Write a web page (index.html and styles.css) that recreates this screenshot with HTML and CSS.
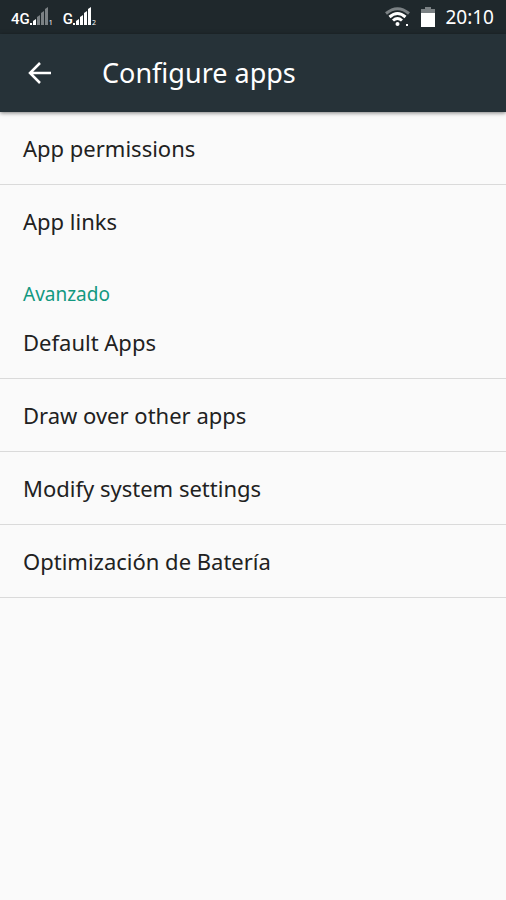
FILE: index.html
```html
<!DOCTYPE html>
<html lang="en">
<head>
<meta charset="utf-8">
<meta name="viewport" content="width=device-width, initial-scale=1">
<title>Configure apps</title>
<link rel="stylesheet" href="styles.css">
</head>
<body>
<div class="statusbar">
   <div class="sim">
      <span class="network">4G</span>
      <svg class="signal" width="20" height="20" viewBox="0 0 20 20" fill="#fff">
         <rect x="0" y="16" width="2" height="2"/>
         <path d="M3 14l3-2v6H3z"/>
         <path fill="#7b8184" d="M7 10l3-2v10H7zM11 6l3-2v14h-3zM15 2l3-2v18h-3z"/>
      </svg>
      <span class="slot">1</span>
   </div>
   <div class="sim">
      <span class="network">G</span>
      <svg class="signal" width="20" height="20" viewBox="0 0 20 20" fill="#fff">
         <rect x="0" y="16" width="2" height="2"/>
         <path d="M3 14l3-2v6H3zM7 10l3-2v10H7zM11 6l3-2v14h-3zM15 2l3-2v18h-3z"/>
      </svg>
      <span class="slot">2</span>
   </div>
   <div class="system">
      <svg width="26" height="20" viewBox="0 0 26 20" fill="none" stroke="#fff" stroke-width="3">
         <path stroke="#7b8184" d="M1 6.500Q12.500 -3 24 6.500"/>
         <path d="M4.500 10Q12.500 3 20.500 10"/>
         <path d="M8 13.500Q12.500 9.500 17 13.500"/>
         <circle cx="12.500" cy="17" r="2" fill="#fff" stroke="none"/>
         <path stroke-width="2" d="M21 18h2"/>
      </svg>
      <svg class="battery" width="14" height="20" viewBox="0 0 14 20">
         <path fill="#7b8184" d="M4 0h6v2h4v4H0V2h4z"/>
         <path fill="#fff" d="M0 6h14v14H0z"/>
      </svg>
      <span class="clock">20:10</span>
   </div>
</div>

<header class="toolbar">
   <button class="back" type="button" aria-label="Back">
      <svg width="24" height="24" viewBox="0 0 24 24" fill="none" stroke="#fff" stroke-width="2.500">
         <path d="M24 12H3M13 2L3 12l10 10"/>
      </svg>
   </button>
   <h1>Configure apps</h1>
</header>

<main>
   <ul class="list">
      <li><a href="#permissions">App permissions</a></li>
      <li><a href="#links">App links</a></li>
   </ul>
   <h2>Avanzado</h2>
   <ul class="list advanced">
      <li><a href="#default">Default Apps</a></li>
      <li><a href="#draw">Draw over other apps</a></li>
      <li><a href="#modify">Modify system settings</a></li>
      <li><a href="#battery">Optimización de Batería</a></li>
   </ul>
</main>
</body>
</html>
```
FILE: styles.css
```css
* {
    box-sizing: border-box;
}

body {
    margin: 0;
    background: #fafafa;
    color: #212121;
    font-family: "Noto Sans", "Open Sans", sans-serif;
}

/* Status bar */
.statusbar {
    display: flex;
    align-items: center;
    height: 34px;
    padding: 0 12px 0 11px;
    background: #1f282c;
    color: #fff;
}

.sim {
    display: flex;
    align-items: flex-end;
    height: 20px;
    margin-right: 10px;
}

.network {
    font-family: Roboto, sans-serif;
    font-size: 15px;
    font-weight: 500;
    line-height: 16px;
}

.slot {
    font-size: 7px;
    line-height: 8px;
    margin-left: -1px;
}

.system {
    display: flex;
    align-items: center;
    margin-left: auto;
}

.battery {
    margin: 0 10px;
}

.clock {
    font-size: 19px;
    line-height: 24px;
}

/* Toolbar */
.toolbar {
    display: flex;
    align-items: center;
    height: 78px;
    padding: 0 23px;
    background: #263238;
    color: #fff;
    box-shadow: 0 1px 4px rgba(0, 0, 0, 0.5);
}

.back {
    width: 32px;
    height: 32px;
    margin-right: 47px;
    padding: 4px;
    border: 0;
    background: none;
}

.back svg {
    display: block;
}

h1 {
    margin: 0;
    font-size: 27px;
    font-weight: 400;
    line-height: 32px;
}

/* Preferences */
.list {
    margin: 0;
    padding: 0;
    list-style: none;
}

.list a {
    display: block;
    height: 73px;
    padding: 0 23px;
    border-bottom: 1px solid #dadada;
    color: inherit;
    font-size: 22px;
    line-height: 72px;
    text-decoration: none;
}

.list:not(.advanced) li:last-child a {
    border-bottom: 0;
}

h2 {
    margin: 0;
    padding: 24px 23px 0;
    color: #129880;
    font-size: 19px;
    font-weight: 400;
    line-height: 24px;
}
```
